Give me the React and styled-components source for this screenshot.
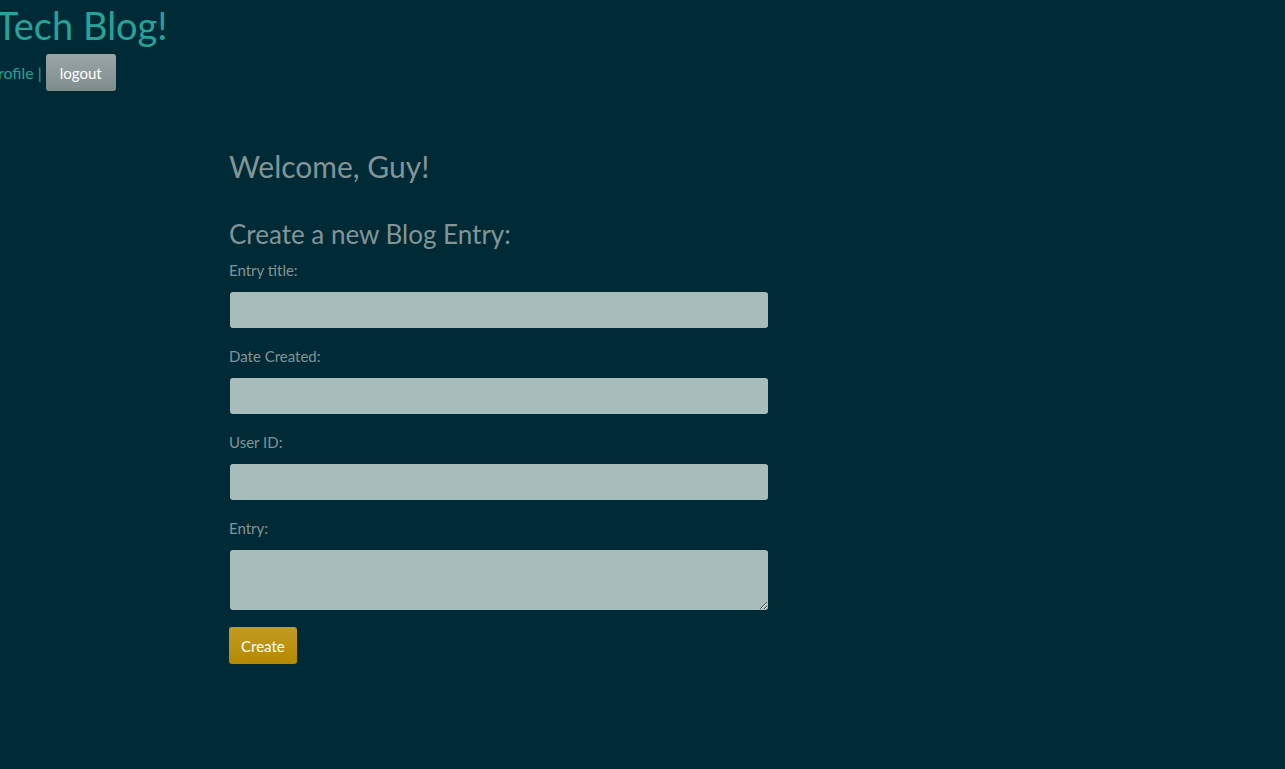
import React from "react";
import styled, { createGlobalStyle } from "styled-components";

const Global = createGlobalStyle`
  html, body { margin: 0; padding: 0; background: #002b36; }
  body { font-family: Lato, "Open Sans", sans-serif; color: #839496; min-height: 769px; }
`;

const Header = styled.header`
  margin-left: -4px;
`;

const Title = styled.h1`
  margin: 0;
  padding-top: 2px;
  font-size: 38px;
  font-weight: 400;
  line-height: 46px;
  color: #2aa198;
`;

const Nav = styled.nav`
  display: flex;
  align-items: center;
  gap: 4px;
  margin-left: -7px;
  margin-top: 6px;
`;

const NavLink = styled.a`
  color: #2aa198;
  font-size: 16px;
  text-decoration: none;
`;

const Sep = styled.span`
  color: #2aa198;
  font-size: 16px;
`;

const Button = styled.button`
  font-family: inherit;
  font-size: 15px;
  color: #fff;
  border: none;
  border-radius: 3px;
  height: 37px;
  padding: 0 ${(p) => p.$px || 12}px;
  background: ${(p) =>
    p.$variant === "gold"
      ? "linear-gradient(#c29b22, #b58900)"
      : "linear-gradient(#9aa5a6, #7f8c8d)"};
  cursor: pointer;
`;

const Main = styled.main`
  padding-left: 229px;
  padding-top: 57px;
  width: 540px;
`;

const Welcome = styled.h2`
  margin: 0;
  font-size: 30px;
  font-weight: 400;
  line-height: 36px;
`;

const FormTitle = styled.h3`
  margin: 34px 0 0;
  font-size: 26px;
  font-weight: 400;
  line-height: 32px;
`;

const Form = styled.form`
  display: flex;
  flex-direction: column;
  align-items: flex-start;
`;

const Label = styled.label`
  display: block;
  font-size: 15px;
  line-height: 20px;
  margin-top: ${(p) => (p.$first ? 10 : 18)}px;
  margin-bottom: 12px;
`;

const Input = styled.input`
  box-sizing: border-box;
  width: 538px;
  height: 36px;
  margin-left: 1px;
  border: none;
  border-radius: 3px;
  background: #a8bcbb;
  font-family: inherit;
  font-size: 15px;
`;

const TextArea = styled.textarea`
  box-sizing: border-box;
  width: 538px;
  height: 60px;
  margin-left: 1px;
  border: none;
  border-radius: 3px;
  background: #a8bcbb;
  font-family: inherit;
  font-size: 15px;
`;

const Actions = styled.div`
  margin-top: 17px;
`;

export default function App() {
  return (
    <>
      <Global />
      <Header>
        <Title>Tech Blog!</Title>
        <Nav>
          <NavLink href="#">profile</NavLink>
          <Sep>|</Sep>
          <Button $px={14}>logout</Button>
        </Nav>
      </Header>
      <Main>
        <Welcome>Welcome, Guy!</Welcome>
        <FormTitle>Create a new Blog Entry:</FormTitle>
        <Form>
          <Label $first>Entry title:</Label>
          <Input type="text" />
          <Label>Date Created:</Label>
          <Input type="text" />
          <Label>User ID:</Label>
          <Input type="text" />
          <Label>Entry:</Label>
          <TextArea />
          <Actions>
            <Button $variant="gold">Create</Button>
          </Actions>
        </Form>
      </Main>
    </>
  );
}
